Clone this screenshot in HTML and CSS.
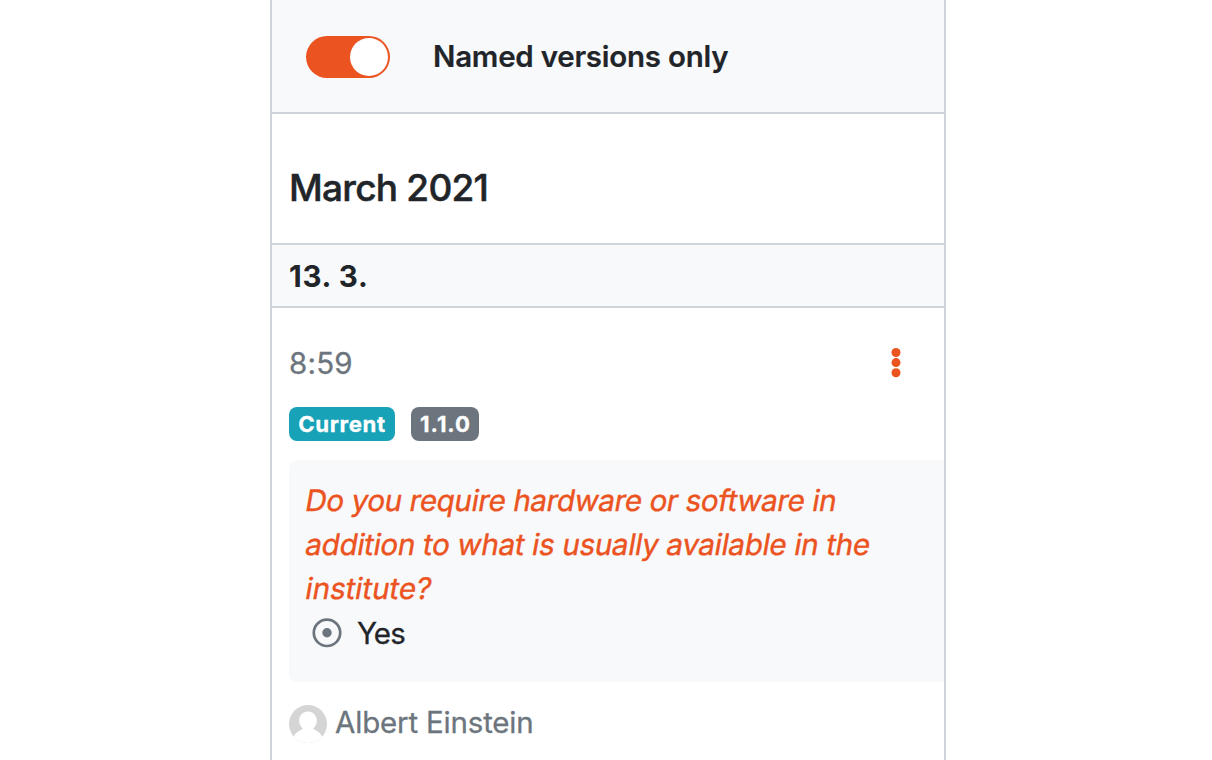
FILE: index.html
```html
<!DOCTYPE html>
<html lang="en">
<head>
<meta charset="utf-8">
<title>Version history</title>
<link rel="stylesheet" href="styles.css">
</head>
<body>
<main class="panel">
  <header class="filter">
    <span class="switch" role="switch" aria-checked="true"><span class="knob"></span></span>
    <span class="filter-label">Named versions only</span>
  </header>
  <h2 class="month"><span>March 2021</span></h2>
  <h3 class="day"><span>13. 3.</span></h3>
  <section class="entry">
    <div class="entry-head">
      <span class="time">8:59</span>
      <svg class="menu" width="10" height="32" viewBox="0 0 10 32"><circle cx="5" cy="5.5" r="4.5"/><circle cx="5" cy="15.6" r="4.5"/><circle cx="5" cy="25.800" r="4.5"/></svg>
    </div>
    <div class="badges">
      <span class="badge current"><span>Current</span></span>
      <span class="badge version"><span>1.1.0</span></span>
    </div>
    <div class="change">
      <div class="question">
        <div><span class="slant first">Do you require hardware or software in</span></div>
        <div><span class="slant second">addition to what is usually available in the</span></div>
        <div><span class="slant">institute?</span></div>
      </div>
      <div class="answer">
        <svg width="30" height="30" viewBox="0 0 30 30"><circle cx="15" cy="14.800" r="13.2" fill="none" stroke="#6c757d" stroke-width="2.7"/><circle cx="15" cy="14.800" r="4.7" fill="#6c757d"/></svg>
        <span class="yes">Yes</span>
      </div>
    </div>
    <div class="author">
      <svg width="38" height="38" viewBox="0 0 38 38"><defs><clipPath id="avatar"><circle cx="19" cy="19" r="19"/></clipPath></defs><g clip-path="url(#avatar)"><path fill="#d5d5d5" d="M0 0h38v38H0z"/><path fill="#fff" d="M19 6.500c5.300 0 8.800 4 8.800 9 0 3.800-1.400 6.300-3.600 8.100 1.500 2.200 5.800 2 9 7.900V38H4.800v-6.500c3.200-5.900 7.500-5.700 9-7.900-2.200-1.800-3.600-4.300-3.600-8.100 0-5 3.500-9 8.800-9z"/></g></svg>
      <span class="name">Albert Einstein</span>
    </div>
  </section>
</main>
</body>
</html>
```
FILE: styles.css
```css
* { box-sizing: border-box; }
body {
  margin: 0;
  height: 760px;
  overflow: hidden;
  background: #fff;
  color: #212529;
  font: 400 29.5px/44.2px Inter, "Liberation Sans", sans-serif;
  white-space: nowrap;
}
.panel {
  width: 676px;
  height: 760px;
  margin-left: 270px;
  border: solid #ced4da;
  border-width: 0 2px;
}
.filter {
  display: flex;
  align-items: center;
  gap: 43px;
  height: 114px;
  padding: 2px 0 0 34px;
  background: #f8f9fb;
  border-bottom: 2px solid #ced4da;
}
.switch {
  display: flex;
  justify-content: flex-end;
  align-items: center;
  width: 84px;
  height: 42px;
  padding-right: 2px;
  border-radius: 21px;
  background: #eb5320;
}
.knob {
  width: 38px;
  height: 38px;
  border-radius: 50%;
  background: #fff;
}
.filter-label {
  margin-top: -1px;
  font-weight: 600;
  letter-spacing: -0.25px;
  -webkit-text-stroke: 0.2px;
}
.month, .day {
  display: flex;
  align-items: center;
  margin: 0;
  padding-left: 17px;
  border-bottom: 2px solid #ced4da;
}
.month {
  height: 131px;
  padding-top: 19px;
  font-size: 37px;
  font-weight: 500;
  letter-spacing: -0.75px;
  -webkit-text-stroke: 0.5px;
}
.day {
  height: 63px;
  padding-top: 2px;
  background: #f8f9fb;
  font-size: 29.5px;
  font-weight: 700;
  letter-spacing: 0.7px;
}
.entry { padding: 33px 0 0 17px; }
.entry-head {
  display: flex;
  justify-content: space-between;
  align-items: center;
  height: 44px;
  padding-right: 43px;
}
.time, .name { color: #6c757d; -webkit-text-stroke: 0.3px; }
.time { letter-spacing: 0.2px; }
.name { letter-spacing: -0.18px; }
.menu { fill: #eb5320; }
.badges {
  display: flex;
  gap: 16px;
  margin-top: 22px;
}
.badge {
  display: flex;
  align-items: center;
  justify-content: center;
  height: 34px;
  padding-top: 1px;
  border-radius: 8px;
  color: #fff;
  font-size: 22.2px;
  font-weight: 700;
  -webkit-text-stroke: 0.3px;
}
.current { width: 106px; background: #17a2b8; letter-spacing: 0.6px; }
.version { width: 68px; padding-left: 1px; background: #6c757d; letter-spacing: 0.9px; }
.change {
  height: 222px;
  margin-top: 19px;
  padding: 18px 0 0 17px;
  border-radius: 8px 0 0 8px;
  background: #f8f9fb;
}
.question { color: #eb5320; }
.slant {
  display: inline-block;
  transform: skewX(-10deg);
  -webkit-text-stroke: 0.4px;
}
.first { letter-spacing: -0.36px; }
.second { letter-spacing: -0.28px; }
.answer {
  display: flex;
  align-items: center;
  gap: 15px;
  padding-left: 6px;
}
.yes { letter-spacing: -0.9px; -webkit-text-stroke: 0.3px; }
.author {
  display: flex;
  align-items: center;
  gap: 8px;
  margin-top: 18px;
}
.author svg { margin-top: 4px; }
```
